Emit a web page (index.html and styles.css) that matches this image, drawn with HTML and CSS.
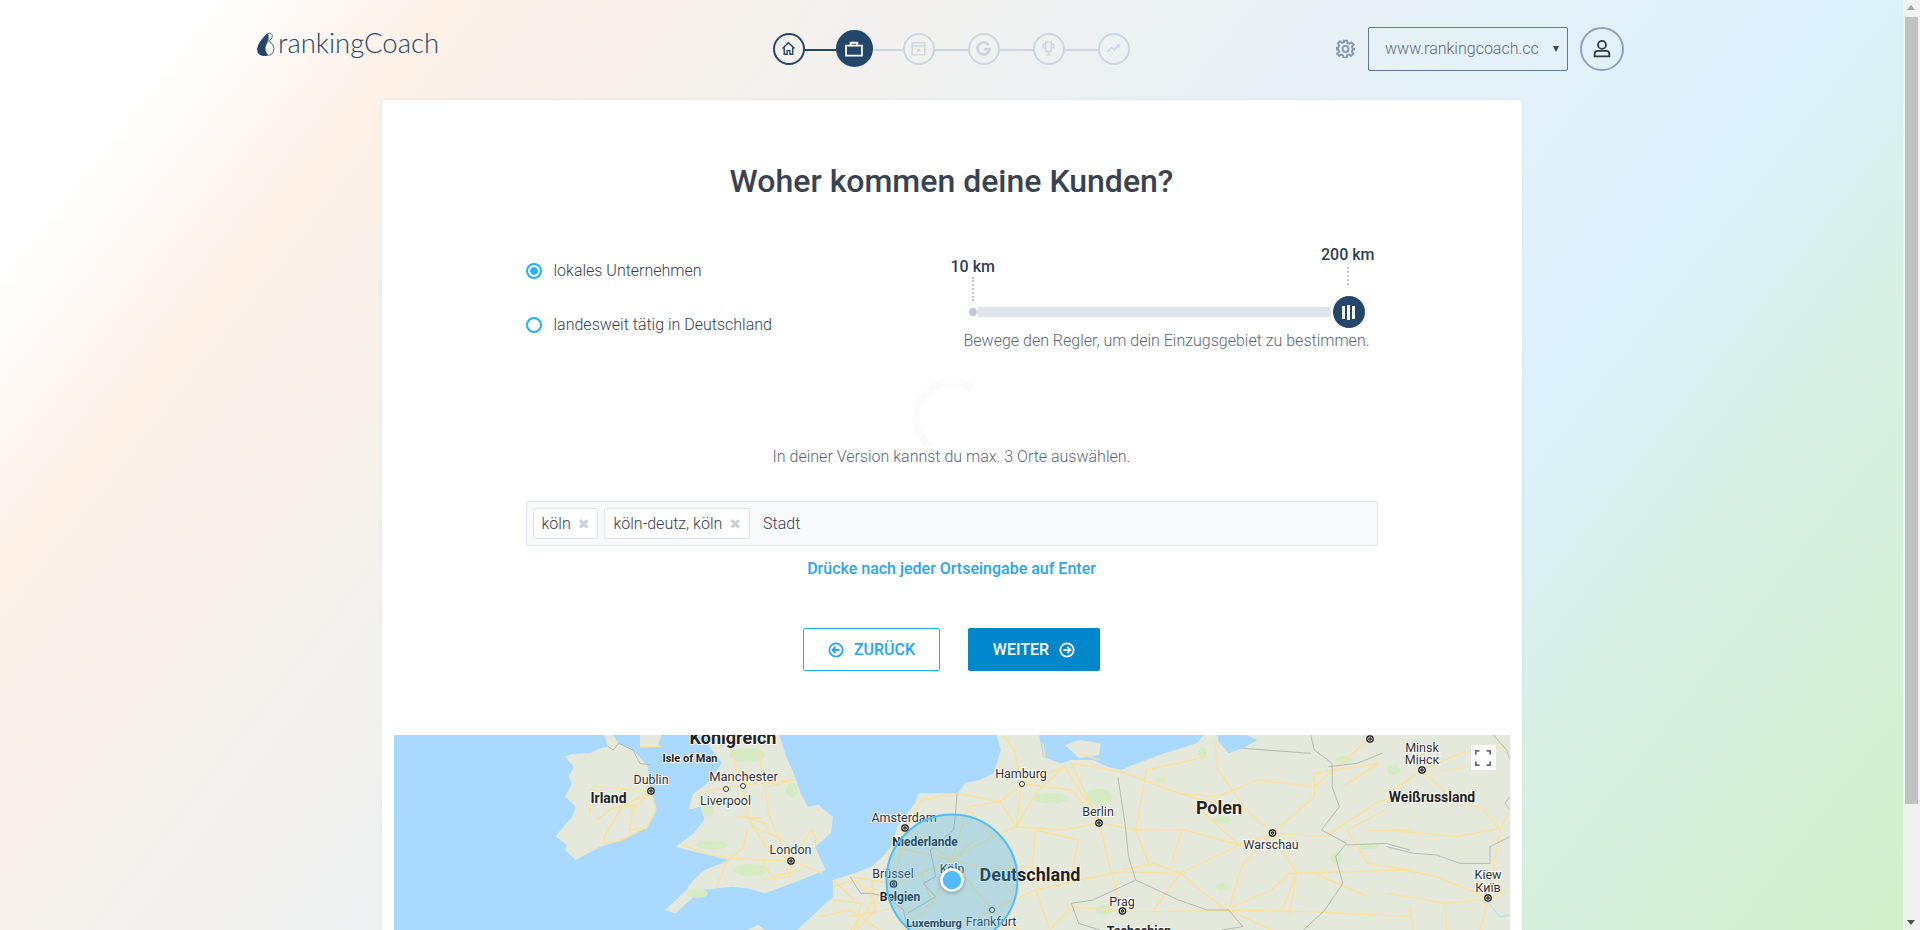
FILE: index.html
```html
<!DOCTYPE html>
<html lang="de">
<head>
<meta charset="utf-8">
<title>rankingCoach</title>
<link rel="stylesheet" href="styles.css">
</head>
<body>
<div class="viewport">
  <div class="page">
    <header class="topbar">
      <a class="logo">
        <svg class="logo-mark" viewBox="0 0 18 24"><path class="logo-fill" d="M11 1C7 5 1 11 1 17c0 4 3 6 7 6 2 0 3-.5 4-1-3-2-4-6-2-10 1-2 2-4 2-7 0-2 0-3-1-4z"/><path class="logo-line" d="M11.500 1.500c2-1 4 0 4 2.500 0 2.500-2 3.500-3.500 5 2.500 1 5 3.500 5 7 0 4-2 6-5 6.500"/></svg>
        <span class="logo-text">rankingCoach</span>
      </a>
      <nav class="stepper">
        <span class="step done"><svg viewBox="0 0 24 24"><path d="M3.500 12 12 4l8.500 8M6 10v10h4v-5h4v5h4V10"/></svg></span>
        <span class="link dark w31"></span>
        <span class="step active"><svg viewBox="0 0 24 24"><path d="M2.500 8h19v12h-19zM8 8V4.500h8V8"/></svg></span>
        <span class="link w30"></span>
        <span class="step"><svg viewBox="0 0 24 24"><path d="M3 4h18v17H3zM3 8.500h18"/><circle class="solid" cx="12" cy="14.500" r="2"/></svg></span>
        <span class="link w33"></span>
        <span class="step"><svg viewBox="0 0 24 24"><path class="thick" d="M19 7a8.500 8.500 0 1 0 1.500 6H12.500"/></svg></span>
        <span class="link w33"></span>
        <span class="step"><svg viewBox="0 0 24 24"><path d="M8 3h8v10a4 4 0 0 1-8 0zM8 6H4.500v5H8M16 6h3.500v5H16M9 21h6M12 17v4"/></svg></span>
        <span class="link w33"></span>
        <span class="step"><svg viewBox="0 0 24 24"><path d="m3 17 6-6 4 3 7-7M16 7h4v4"/></svg></span>
      </nav>
      <div class="account">
        <svg class="gear" viewBox="0 0 24 24"><path d="M10 2h4l.6 3 2.300 1 2.600-1.700 2.800 2.800L20 9.700l1 2.300 3 .5v-1 1.500l-3 .6-1 2.300 1.700 2.600-2.800 2.800-2.600-1.700-2.300 1-.6 3h-4l-.6-3-2.300-1-2.600 1.700-2.800-2.800L4 15.900 3 13.500l-3-.6v-1.800l3-.6 1-2.300-1.700-2.600 2.800-2.800L7.700 5 10 4z"/><circle cx="12" cy="12.500" r="3.800"/></svg>
        <div class="site-select"><span>www.rankingcoach.cc</span><i class="caret"></i></div>
        <span class="avatar"><svg viewBox="0 0 24 24"><circle cx="12" cy="7.500" r="4.300"/><path d="M4 20v-2.500c0-2 1.500-3.500 3.500-3.500h9c2 0 3.500 1.500 3.500 3.500V20z"/></svg></span>
      </div>
    </header>

    <main class="card">
      <h1 class="title">Woher kommen deine Kunden?</h1>
      <div class="form">
        <section class="choice">
          <div class="radios">
            <label class="radio on"><i></i>lokales Unternehmen</label>
            <label class="radio"><i></i>landesweit tätig in Deutschland</label>
          </div>
          <div class="range">
            <span class="bubble min">10 km</span>
            <span class="bubble max">200 km</span>
            <div class="track">
              <i class="dot"></i>
              <span class="knob"><b></b><b></b><b></b></span>
            </div>
            <p class="hint">Bewege den Regler, um dein Einzugsgebiet zu bestimmen.</p>
          </div>
        </section>
        <div class="spinner"></div>
        <p class="limit">In deiner Version kannst du max. 3 Orte auswählen.</p>
        <div class="tags">
          <span class="tag">köln<i>✖</i></span>
          <span class="tag">köln-deutz, köln<i>✖</i></span>
          <span class="placeholder">Stadt</span>
        </div>
        <p class="enter">Drücke nach jeder Ortseingabe auf Enter</p>
        <div class="actions">
          <button class="btn ghost"><svg viewBox="0 0 18 18"><circle cx="9" cy="9" r="7.500"/><path d="M13 9H5.500M8.500 5.500 5 9l3.500 3.500"/></svg>Zurück</button>
          <button class="btn solid">Weiter<svg viewBox="0 0 18 18"><circle cx="9" cy="9" r="7.500"/><path d="M5 9h7.500M9.500 5.500 13 9l-3.500 3.500"/></svg></button>
        </div>
      </div>
      <div class="map">
        <svg class="map-art" viewBox="394 735 1116 195" preserveAspectRatio="none">
          <defs><g id="capital"><circle r="3.200"/><circle class="core" r="1.200"/></g></defs>
          <rect class="sea" x="394" y="735" width="1116" height="195"/>
          <g transform="translate(390 730) scale(.35714 .33333)">
            <path class="land" d="M600 15 610 50 580 58 560 70 510 72 490 80 515 110 500 140 510 160 490 200 520 230 510 260 470 310 465 320 495 345 490 360 520 390 590 350 650 330 720 290 745 240 730 180 725 130 720 105 680 60 640 40 625 15zM700 15H760L750 50H700z"/>
            <path class="land" d="M890 15 895 50 930 100 905 135 900 150 850 190 835 240 870 230 880 270 850 310 800 350 825 358 870 370 950 390 880 420 850 450 830 480 770 540 800 550 850 500 870 480 960 470 1000 475 1050 490 1150 450 1220 420 1190 350 1235 310 1240 260 1200 225 1170 230 1150 190 1130 130 1110 80 1090 15z"/>
            <path class="land" d="M1140 600 1180 560 1240 500 1240 450 1300 430 1348 410 1400 360 1420 290 1470 220 1480 190 1590 190 1610 160 1650 150 1690 130 1710 60 1698 15 1818 15 1828 80 1878 100 1908 90 1968 90 2008 110 2048 120 2068 110 2168 70 2258 40 2280 15 2318 15 2320 35 2348 70 2388 55 2428 30 2398 15 3136 15 3136 600z"/>
            <path class="land" d="M1890 45 1930 30 1990 40 1985 75 1930 85z"/>
            <path class="land" d="M1000 600 1030 585 1050 600z"/>
            <g class="green">
              <ellipse cx="1000" cy="75" rx="50" ry="22"/><ellipse cx="900" cy="345" rx="45" ry="14"/><ellipse cx="1010" cy="420" rx="50" ry="18"/><ellipse cx="860" cy="490" rx="30" ry="14"/><ellipse cx="1125" cy="180" rx="16" ry="22"/><ellipse cx="890" cy="240" rx="18" ry="20"/>
              <ellipse cx="1850" cy="205" rx="50" ry="16"/><ellipse cx="1985" cy="200" rx="38" ry="24"/><ellipse cx="2160" cy="150" rx="14" ry="8"/><ellipse cx="2275" cy="70" rx="12" ry="18"/><ellipse cx="2330" cy="270" rx="28" ry="10"/><ellipse cx="2670" cy="90" rx="24" ry="12"/><ellipse cx="2810" cy="120" rx="18" ry="16"/><ellipse cx="2650" cy="385" rx="16" ry="16"/><ellipse cx="2740" cy="350" rx="28" ry="8"/><ellipse cx="2000" cy="540" rx="24" ry="14"/><ellipse cx="2330" cy="470" rx="18" ry="12"/>
            </g>
            <g class="road">
              <path d="M960 50 965 100 990 170 1000 260 1020 290 1050 350 1124 392M1030 60 1050 170 1060 250 1090 330 1124 392M950 170 1040 160 1130 150M990 260 1050 280 1060 300M810 340 880 370 960 385 1040 390 1124 392 1210 430M1000 300 990 350 940 400 915 470M1124 392 1120 440 1040 450M1124 392 1180 300 1200 340M970 260 1040 265M1010 290 1060 310 1100 330M1040 390 1070 440 1150 420M860 190 950 170M1060 170 1130 150"/>
              <path d="M570 170 640 175 731 184 745 240 720 290 650 330 600 340M731 184 650 230 600 320 598 345M731 184 680 240 670 300 720 295M580 270 620 235 690 225M700 50H760M700 130 731 184M565 190 560 250"/>
              <path d="M1240 470 1300 450 1340 480 1400 520 1440 600M1240 510 1320 520 1300 600M1200 560 1290 540 1370 600M1300 450 1358 510 1290 600M1350 415 1410 465M1240 450 1300 510"/>
            </g>
          </g>
          <g transform="translate(850 730) scale(.35714 .33333)">
            <g class="road">
              <path d="M0 440 60 450 122 463 200 430 285 390 400 320 465 290 600 300 698 278 800 300 930 298 1090 345 1183 310 1330 320 1480 215 1568 190M465 290 481 161 420 215 300 190 200 210 155 296 122 463M481 161 600 110 700 275M481 161 460 60 430 15M481 161 620 180 698 278M285 390 330 230 420 215M285 390 397 540 520 480 640 450 763 425 925 430 1090 345M397 540 470 600M397 540 300 600M520 480 560 600M763 544 880 545 1050 540 1280 545 1568 560M763 544 620 530 560 600M763 544 730 420 698 278M925 430 1050 540 1180 480 1230 430 1568 420M1183 310 1110 240 1030 120 1020 35M1183 310 1100 400 1060 540M1183 310 1250 430 1210 540M698 278 620 100 760 125 920 190 1030 200M800 300 830 120 1000 80M1030 200 1140 150 1300 170 1450 30M1183 310 1300 200 1300 130 1480 100M1568 420 1450 400 1390 300"/>
              <path d="M60 450 70 540 20 600M0 560 150 530 200 600M120 350 285 390 230 520 160 590M200 430 230 520M285 390 170 300M285 390 400 420 470 510M520 300 510 410M520 300 640 330 620 430M760 420 850 400 925 430M1250 430 1230 560M640 70 700 90M540 40 545 80M465 290 520 190 600 110M420 215 465 290M330 230 400 320M285 390 350 330M170 300 100 370M400 420 510 410M840 410 800 300M850 540 925 430M1060 540 1180 600M930 298 900 400M1090 345 960 220M1450 300 1568 300M1390 300 1500 240M1300 430 1450 500M1100 240 920 190M1380 170 1480 100"/>
            </g>
            <g class="border">
              <path d="M0 440 30 490 60 490 100 500 150 540 160 590M295 255 290 300 225 360 240 440 205 460 240 500 160 550M300 190 295 255M750 140 770 280 780 380 800 450 680 510 620 520 640 580 700 600M800 450 880 490 920 510 1000 540 1060 540 1100 590 1040 600M1290 15 1300 60 1350 100 1350 170 1370 230 1320 300 1390 340 1360 380 1380 460 1330 540 1270 600M1100 55 1290 70M1390 345 1500 340 1568 360M1340 110 1420 100 1490 70"/>
            </g>
          </g>
          <g transform="translate(390 730) scale(.35714 .33333)"><path class="border" d="M610 50 625 60 640 40 680 60 700 100 730 105"/></g>
          <g transform="translate(1400 730) scale(.33333)">
            <g class="road">
              <path d="M65 121 10 160-40 190M65 121 180 70 320 50M65 121 150 200 250 240 300 300 265 505M-40 300 170 320 300 295M-40 410 110 440 265 505 330 480M-40 490 135 520 265 505M265 505 240 600M135 520 140 600M30 530 40 600M300 300 330 240"/>
              <path class="dash" d="M85 130 210 110"/>
            </g>
            <path class="border" d="M-40 350 40 370 110 375 180 400 270 400 270 350 330 320M280 15 320 60 330 90M330 200 315 220 330 240"/>
            <path class="river" d="M255 460 265 520 300 560 330 555"/>
          </g>

          <g class="city">
            <use href="#capital" x="651" y="791"/><use href="#capital" x="791" y="861"/><use href="#capital" x="905" y="828"/><use href="#capital" x="893.500" y="884"/><use href="#capital" x="1099" y="823"/><use href="#capital" x="1272.500" y="833"/><use href="#capital" x="1122.500" y="911"/><use href="#capital" x="1422" y="770"/><use href="#capital" x="1488" y="898"/><use href="#capital" x="1370" y="739"/>
          </g>
          <g class="town">
            <circle cx="743" cy="786" r="2.500"/><circle cx="726" cy="789" r="2.500"/><circle cx="1022" cy="784" r="2.500"/><circle cx="992" cy="910" r="2.500"/>
          </g>
          <g class="lbl">
            <text x="651" y="784">Dublin</text><text class="md" x="743.500" y="781">Manchester</text><text x="725.500" y="805">Liverpool</text><text x="790.500" y="854">London</text><text x="904" y="822">Amsterdam</text><text x="893" y="878">Brüssel</text><text x="991" y="926">Frankfurt</text><text x="952" y="873">Köln</text><text x="1021" y="778">Hamburg</text><text x="1098" y="816">Berlin</text><text x="1271" y="849">Warschau</text><text x="1122" y="906">Prag</text><text x="1422" y="752">Minsk</text><text x="1422" y="764">Мінск</text><text x="1488" y="879">Kiew</text><text x="1488" y="892">Київ</text>
          </g>
          <g class="lbl bold">
            <text class="xxl" x="733" y="744">Königreich</text><text class="xs" x="690" y="762">Isle of Man</text><text class="lg" x="608.500" y="803">Irland</text><text class="sm" x="925" y="846">Niederlande</text><text class="sm" x="900" y="901">Belgien</text><text class="xs" x="934" y="927">Luxemburg</text><text class="xxl" x="1030" y="881">Deutschland</text><text class="xxl" x="1219" y="814">Polen</text><text class="lg" x="1432" y="802">Weißrussland</text><text x="1139" y="935">Tschechien</text>
          </g>
          <circle class="area" cx="952" cy="880" r="65.500"/>
          <circle class="pin" cx="952" cy="880" r="10.500"/>
        </svg>
        <span class="fullscreen"><svg viewBox="0 0 18 18"><path d="M1 5V1h4M13 1h4v4M17 13v4h-4M5 17H1v-4"/></svg></span>
      </div>
    </main>
  </div>
  <div class="scrollbar"><i class="arrow up"></i><span class="thumb"></span><i class="arrow down"></i></div>
</div>
</body>
</html>
```

FILE: styles.css
```css
* { box-sizing: border-box; }
html, body { margin: 0; height: 930px; overflow: hidden; }
body { font-family: Roboto, "Liberation Sans", sans-serif; color: #3a4552; }
.viewport { display: flex; height: 930px; }
.page {
  width: 1903px; height: 930px; overflow: hidden;
  background: linear-gradient(128deg, #fff 0, #fff 8%, #fdf1e8 17%, #eff1f1 40%, #ddf1fd 70%, #d8f0e8 79%, #d2f0cb 100%);
}
.topbar { display: grid; grid-template-columns: 1fr auto 1fr; align-items: center; height: 100px; padding: 0 279px 3px 256px; }
.logo { display: flex; align-items: center; gap: 3px; color: #24476b; justify-self: start; margin-top: -8px; }
.logo-mark { width: 19px; height: 25px; }
.logo-fill { fill: #24476b; }
.logo-line { fill: none; stroke: #24476b; stroke-width: .8; }
.logo-text { font: 300 27.500px/36px Lato, sans-serif; padding-bottom: 3px; }
.stepper { display: flex; align-items: center; transform: translateX(11px); }
.step { width: 32px; height: 32px; border: 2px solid #cdd5e0; border-radius: 50%; display: flex; align-items: center; justify-content: center; }
.step svg { width: 17px; height: 17px; fill: none; stroke: #cdd5e0; stroke-width: 2; }
.step .solid { fill: #cdd5e0; stroke: none; }
.step .thick { stroke-width: 4; }
.step.done { border-color: #24466a; }
.step.done svg { stroke: #24466a; }
.step.active { width: 37px; height: 37px; background: #24466a; border-color: #24466a; }
.step.active svg { width: 20px; height: 20px; stroke: #fff; stroke-width: 2.200; }
.link { height: 2px; background: #cdd5e0; margin-top: 2px; }
.link.dark { background: #24466a; }
.w31 { width: 31px; } .w30 { width: 30px; } .w33 { width: 33px; }
.account { display: flex; align-items: center; justify-self: end; }
.gear { width: 19px; height: 19px; fill: none; stroke: #8298af; stroke-width: 2.400; margin-right: 13px; }
.site-select { position: relative; width: 200px; height: 44px; border: 1px solid #5d7a99; border-radius: 2px; padding-left: 16px; font: 300 16px/41px Roboto, sans-serif; color: #5c6b7b; }
.caret { position: absolute; right: 8px; top: 18px; border: 3px solid transparent; border-top: 6px solid #3d4650; border-bottom: 0; }
.avatar { width: 44px; height: 44px; margin-left: 12px; border: 2px solid #8fa3b8; border-radius: 50%; display: flex; align-items: center; justify-content: center; }
.avatar svg { width: 22px; height: 22px; fill: none; stroke: #2f3a45; stroke-width: 2; }

.card { width: 1140px; height: 830px; margin: 0 auto; background: #fff; border-radius: 4px 4px 0 0; padding: 0 12px; box-shadow: 0 0 4px rgba(80,100,120,.08); }
.title { margin: 0; padding-top: 60px; font: 500 32px/42px Roboto, sans-serif; color: #38434f; text-align: center; }
.form { width: 852px; margin: 0 auto; }
.choice { display: flex; justify-content: space-between; height: 115px; margin-top: 47px; }
.radios { display: flex; flex-direction: column; gap: 35px; padding-top: 12px; }
.radio { display: flex; align-items: center; gap: 12px; font: 300 16px/19px Roboto, sans-serif; color: #36414d; }
.radio i { width: 16px; height: 16px; border: 2px solid #1fb0ff; border-radius: 50%; display: block; }
.radio.on i { background: radial-gradient(circle, #1fb0ff 0 3.500px, #fff 4px); }
.range { position: relative; width: 427px; padding-top: 58px; }
.bubble { position: absolute; font: 500 16px/19px Roboto, sans-serif; color: #2f3e4f; }
.bubble::after { content: ""; position: absolute; border-left: 2px dotted #bfc5d3; }
.min { left: 0; top: 8px; }
.min::after { left: 21px; top: 20px; height: 24px; }
.max { right: 3px; top: -4px; }
.max::after { left: 26px; top: 22px; height: 18px; }
.track { position: relative; height: 10px; width: 353px; margin-left: 27px; background: #dfe3ec; }
.dot { position: absolute; left: -9px; top: 1px; width: 8px; height: 8px; border-radius: 50%; background: #c3cad6; }
.knob { position: absolute; right: -34px; top: -11px; width: 32px; height: 32px; border-radius: 50%; background: #24466a; display: flex; align-items: center; justify-content: center; gap: 2px; }
.knob b { width: 3px; height: 13px; background: #fff; display: block; }
.knob b:nth-child(2) { height: 15px; }
.hint { margin: 14px 0 0 13px; font: 300 16px/19px Roboto, sans-serif; color: #5a6675; white-space: nowrap; }
.spinner { width: 80px; height: 80px; margin: 14px auto -11px; border-radius: 50%; border: 8px solid transparent; border-top-color: #fbfbfb; border-left-color: #fbfbfb; transform: rotate(-10deg); }
.limit { margin: 0; text-align: center; font: 300 16px/20px Roboto, sans-serif; color: #5a6675; position: relative; }
.tags { display: flex; align-items: center; gap: 6px; height: 45px; margin-top: 34px; padding: 0 6px; background: #f8f9fb; border: 1px solid #e2e5ee; border-radius: 2px; }
.tag { display: flex; align-items: center; gap: 7px; height: 31px; padding: 0 8px; background: #fff; border: 1px solid #e2e5ee; border-radius: 2px; font: 300 16px/19px Roboto, sans-serif; color: #36414d; }
.tag i { font: normal 14px/1 "DejaVu Sans", sans-serif; color: #ccd0d7; }
.placeholder { margin-left: 7px; font: 300 16px/19px Roboto, sans-serif; color: #36414d; }
.enter { margin: 13px 0 0; text-align: center; font: 500 16px/20px Roboto, sans-serif; color: #2aa4f4; }
.actions { display: flex; justify-content: center; gap: 28px; margin-top: 49px; }
.btn { display: flex; align-items: center; justify-content: center; gap: 10px; height: 43px; padding: 0; border-radius: 2px; font: 500 16px/20px Roboto, sans-serif; text-transform: uppercase; }
.btn svg { width: 16px; height: 16px; fill: none; stroke-width: 2; stroke: currentColor; }
.ghost { width: 137px; background: #fff; border: 1px solid #1fb0ff; color: #1fa8fb; }
.solid.btn { width: 132px; background: #0086cb; border: 0; color: #fff; }
.map { position: relative; width: 1116px; height: 195px; margin-top: 64px; overflow: hidden; }
.map-art { display: block; width: 1116px; height: 195px; }
.sea { fill: #a9d9fe; }
.land { fill: #e4e9dc; }
.green { fill: #d6ebc4; }
.road path { fill: none; stroke: #fde09a; stroke-width: 4; stroke-linejoin: round; }
.road .dash { stroke-dasharray: 8 6; }
.border, .border path { fill: none; stroke: #a2a39e; stroke-width: 2; }
.river { fill: none; stroke: #a9d9fe; stroke-width: 3; }
.area { fill: rgba(72,180,240,.3); stroke: #50bdf9; stroke-width: 2; }
.city use { fill: #fff; stroke: #111; stroke-width: 1.200; }
.city .core { fill: #111; stroke: none; }
.town circle { fill: #fff; stroke: #333; stroke-width: 1; }
.lbl text { font: 400 12.500px Roboto, sans-serif; fill: #333; text-anchor: middle; paint-order: stroke; stroke: rgba(255,255,255,.85); stroke-width: 2px; }
.lbl .md { font-size: 13px; }
.lbl.bold text { font-weight: 700; font-size: 12.500px; fill: #222; }
.lbl.bold .xs { font-size: 11px; }
.lbl.bold .sm { font-size: 12px; }
.lbl.bold .lg { font-size: 14px; }
.lbl.bold .xxl { font-size: 18px; }
.pin { fill: #52bbfd; stroke: #fff; stroke-width: 2.500; filter: drop-shadow(0 1px 2px rgba(0,0,0,.3)); }
.fullscreen { position: absolute; top: 10px; right: 14px; width: 25px; height: 25px; background: #fff; display: flex; align-items: center; justify-content: center; }
.fullscreen svg { width: 16px; height: 16px; fill: none; stroke: #6b6b6b; stroke-width: 2; }
.scrollbar { position: relative; width: 17px; height: 930px; background: #f1f1f1; }
.thumb { position: absolute; left: 2px; top: 17px; width: 13px; height: 787px; background: #c1c1c1; }
.arrow { position: absolute; left: 4px; border: 4px solid transparent; }
.arrow.up { top: 5px; border-top: 0; border-bottom: 5px solid #a3a3a3; }
.arrow.down { bottom: 5px; border-bottom: 0; border-top: 5px solid #505050; }
```
